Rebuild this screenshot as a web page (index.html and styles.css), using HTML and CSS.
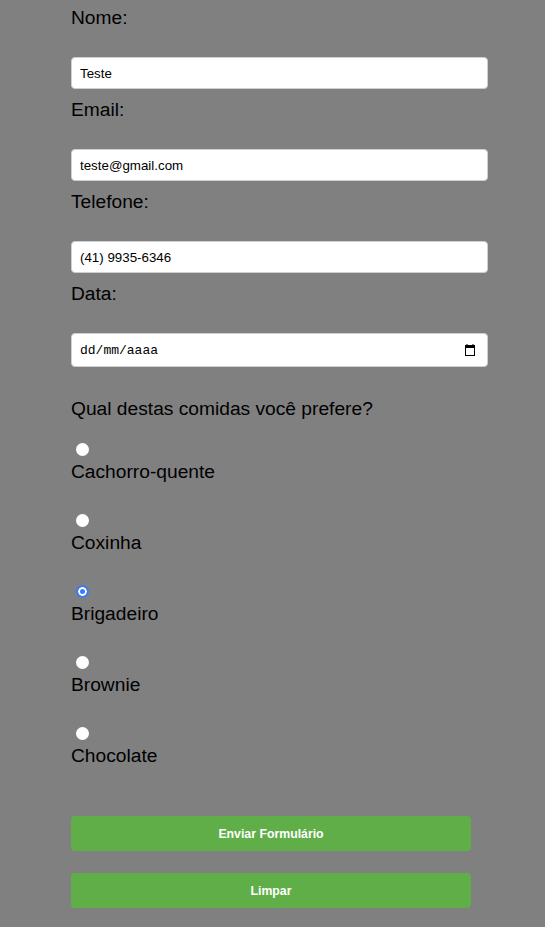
FILE: index.html
```html
<!DOCTYPE html>
<html lang="pt-BR">
<head>
<meta charset="utf-8">
<title>Formulário</title>
<link rel="stylesheet" href="styles.css">
</head>
<body>
<form class="form">
  <label class="field-label" for="nome">Nome:</label>
  <input class="text-input" id="nome" type="text" value="Teste">
  <label class="field-label" for="email">Email:</label>
  <input class="text-input" id="email" type="text" value="teste@gmail.com">
  <label class="field-label" for="tel">Telefone:</label>
  <input class="text-input" id="tel" type="text" value="(41) 9935-6346">
  <label class="field-label" for="data">Data:</label>
  <div class="date-wrap">
    <input class="text-input date-input" id="data" type="text" placeholder="dd/mm/aaaa">
    <svg class="cal-icon" width="10" height="12" viewBox="0 0 10 12" aria-hidden="true">
      <rect x="1.5" y="0" width="1" height="2" fill="#000"/>
      <rect x="7.5" y="0" width="1" height="2" fill="#000"/>
      <rect x="0" y="1.5" width="10" height="2.5" fill="#000"/>
      <rect x="0.5" y="1.5" width="9" height="10" fill="none" stroke="#000" stroke-width="1"/>
    </svg>
  </div>
  <p class="question">Qual destas comidas você prefere?</p>
  <div class="options">
    <div class="option"><input class="radio" type="radio" name="comida" id="c1"><label class="option-label" for="c1">Cachorro-quente</label></div>
    <div class="option"><input class="radio" type="radio" name="comida" id="c2"><label class="option-label" for="c2">Coxinha</label></div>
    <div class="option"><input class="radio" type="radio" name="comida" id="c3" checked><label class="option-label" for="c3">Brigadeiro</label></div>
    <div class="option"><input class="radio" type="radio" name="comida" id="c4"><label class="option-label" for="c4">Brownie</label></div>
    <div class="option"><input class="radio" type="radio" name="comida" id="c5"><label class="option-label" for="c5">Chocolate</label></div>
  </div>
  <div class="actions">
    <button class="btn" type="button">Enviar Formulário</button>
    <button class="btn" type="reset">Limpar</button>
  </div>
</form>
</body>
</html>
```
FILE: styles.css
```css
html, body {
  margin: 0;
  padding: 0;
}
body {
  background: #808080;
  font-family: "Liberation Sans", Arial, sans-serif;
  color: #000;
}
.form {
  display: flex;
  flex-direction: column;
  align-items: flex-start;
  padding: 7px 0 20px 71px;
  width: 417px;
}
.field-label {
  display: block;
  font-size: 19.2px;
  line-height: 22px;
  margin: 0 0 28px;
}
.text-input {
  box-sizing: border-box;
  width: 417px;
  height: 32px;
  margin: 0 0 10px;
  padding: 0 8px;
  border: 1px solid #cfcfcf;
  border-radius: 4px;
  background: #fff;
  font-family: "Liberation Sans", Arial, sans-serif;
  font-size: 13.33px;
  color: #000;
  outline: none;
}
.date-wrap {
  position: relative;
  width: 417px;
}
.date-input {
  height: 34px;
  margin: 0;
  font-family: "Liberation Mono", "DejaVu Sans Mono", monospace;
  font-size: 13px;
}
.date-input::placeholder {
  color: #000;
  opacity: 1;
}
.cal-icon {
  position: absolute;
  right: 13px;
  top: 11px;
}
.question {
  margin: 31px 0 0;
  font-size: 19.2px;
  line-height: 22px;
}
.options {
  display: flex;
  flex-direction: column;
  gap: 31px;
  margin-top: 23px;
}
.option {
  display: flex;
  flex-direction: column;
  align-items: flex-start;
}
.radio {
  appearance: none;
  -webkit-appearance: none;
  box-sizing: border-box;
  width: 13px;
  height: 13px;
  margin: 0 0 5px 5px;
  border-radius: 50%;
  background: #fff;
  border: none;
}
.radio:checked {
  border: 2px solid #3d7bf2;
  background: #3d7bf2;
  box-shadow: inset 0 0 0 2px #fff;
}
.option-label {
  font-size: 19.2px;
  line-height: 22px;
}
.actions {
  display: flex;
  flex-direction: column;
  gap: 22px;
  margin-top: 49px;
}
.btn {
  width: 400px;
  height: 35px;
  border: none;
  border-radius: 4px;
  background: #5fae48;
  color: #fff;
  font-family: "Liberation Sans", Arial, sans-serif;
  font-weight: bold;
  font-size: 12.3px;
  cursor: pointer;
}
```
